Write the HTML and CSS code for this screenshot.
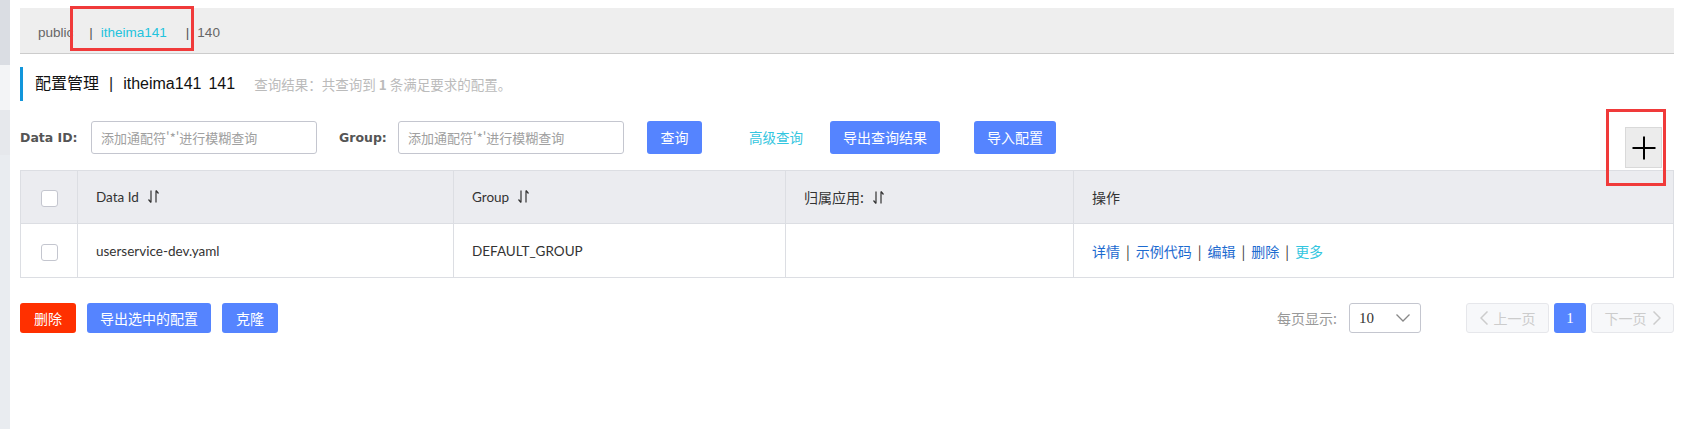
FILE: index.html
```html
<!DOCTYPE html>
<html lang="zh-CN">
<head>
<meta charset="utf-8">
<title>配置管理</title>
<link rel="stylesheet" href="styles.css">
</head>
<body>
<div class="app">
  <aside class="sidebar">
    <div class="sb-a"></div>
    <div class="sb-b"></div>
    <div class="sb-c"></div>
  </aside>
  <main class="main">
    <div class="ns-bar">
      <span class="ns ns-first">public</span>
      <span class="sep">|</span>
      <span class="ns active">itheima141</span>
      <span class="sep">|</span>
      <span class="ns">140</span>
    </div>

    <div class="title">
      <span>配置管理</span>
      <span class="title-bar">|</span>
      <span>itheima141</span>
      <span class="title-id">141</span>
      <span class="result">查询结果：共查询到 <b>1</b> 条满足要求的配置。</span>
    </div>

    <div class="filter">
      <span class="label label-id">Data ID:</span>
      <div class="input">添加通配符'*'进行模糊查询</div>
      <span class="label label-group">Group:</span>
      <div class="input">添加通配符'*'进行模糊查询</div>
      <button class="btn btn-primary btn-query">查询</button>
      <span class="text-btn">高级查询</span>
      <button class="btn btn-primary btn-export">导出查询结果</button>
      <button class="btn btn-primary btn-import">导入配置</button>
      <button class="add-btn" aria-label="新建配置">
        <svg width="24" height="24" viewBox="0 0 24 24"><path d="M12 0.5V23.5M0.5 12H23.5" stroke="#000" stroke-width="2" fill="none"/></svg>
      </button>
    </div>

    <table class="grid">
      <colgroup>
        <col class="c-check"><col class="c-id"><col class="c-group"><col class="c-app"><col class="c-op">
      </colgroup>
      <thead>
        <tr>
          <th class="cell-check"><span class="checkbox"></span></th>
          <th>Data Id<svg class="sort" width="11" height="13" viewBox="0 0 11 13"><path d="M3 0.5V12.5M3 12.5L0.5 9.5M8 12.5V0.5M8 0.5L10.5 3.5" stroke="#333" stroke-width="1.2" fill="none"/></svg></th>
          <th>Group<svg class="sort" width="11" height="13" viewBox="0 0 11 13"><path d="M3 0.5V12.5M3 12.5L0.5 9.5M8 12.5V0.5M8 0.5L10.5 3.5" stroke="#333" stroke-width="1.2" fill="none"/></svg></th>
          <th class="cjk">归属应用:<svg class="sort" width="11" height="13" viewBox="0 0 11 13"><path d="M3 0.5V12.5M3 12.5L0.5 9.5M8 12.5V0.5M8 0.5L10.5 3.5" stroke="#333" stroke-width="1.2" fill="none"/></svg></th>
          <th class="cjk">操作</th>
        </tr>
      </thead>
      <tbody>
        <tr>
          <td class="cell-check"><span class="checkbox"></span></td>
          <td>userservice-dev.yaml</td>
          <td>DEFAULT_GROUP</td>
          <td></td>
          <td class="ops cjk"><a>详情</a><span class="op-sep">|</span><a>示例代码</a><span class="op-sep">|</span><a>编辑</a><span class="op-sep">|</span><a>删除</a><span class="op-sep">|</span><a class="more">更多</a></td>
        </tr>
      </tbody>
    </table>

    <div class="footer">
      <button class="btn btn-danger">删除</button>
      <button class="btn btn-primary btn-gap">导出选中的配置</button>
      <button class="btn btn-primary btn-gap btn-clone">克隆</button>
      <div class="pager">
        <span class="pager-label">每页显示:</span>
        <div class="select">
          <span class="select-value">10</span>
          <svg width="14" height="8" viewBox="0 0 14 8"><path d="M0.5 0.5L7 7L13.5 0.5" stroke="#888" stroke-width="1.3" fill="none"/></svg>
        </div>
        <button class="page-btn page-nav page-prev"><svg width="8" height="14" viewBox="0 0 8 14"><path d="M7.5 0.5L1 7L7.5 13.5" stroke="#ccc" stroke-width="1.5" fill="none"/></svg>上一页</button>
        <button class="page-btn page-current">1</button>
        <button class="page-btn page-nav page-next">下一页<svg width="8" height="14" viewBox="0 0 8 14"><path d="M0.5 0.5L7 7L0.5 13.5" stroke="#ccc" stroke-width="1.5" fill="none"/></svg></button>
      </div>
    </div>
  </main>

  <div class="mark mark-ns"></div>
  <div class="mark mark-add"></div>
</div>
</body>
</html>
```

FILE: styles.css
```css
* { box-sizing: border-box; }

html, body {
  margin: 0;
  padding: 0;
  background: #fff;
}

body {
  font-family: Lato, "Noto Sans CJK SC", sans-serif;
  font-size: 13.5px;
  color: #333;
  width: 1684px;
  height: 429px;
  overflow: hidden;
}

.cjk {
  font-family: "Noto Sans CJK SC", sans-serif;
  font-size: 14px;
}

.app {
  position: relative;
  display: flex;
  height: 429px;
}

/* left sidebar strip */
.sidebar {
  width: 10px;
  flex: none;
  display: flex;
  flex-direction: column;
  background: #e9ecf0;
}
.sb-a { height: 65px; background: #dadde3; }
.sb-b { height: 45px; background: #f3f4f6; }
.sb-c { height: 45px; background: #e6e8ec; }

.main {
  flex: 1;
  min-width: 0;
  padding: 8px 10px 0 10px;
}

/* namespace bar */
.ns-bar {
  height: 46px;
  background: #eeeeee;
  border-bottom: 1px solid #cccccc;
  display: flex;
  align-items: center;
  padding: 4px 0 0 18px;
  font-family: "Liberation Sans", sans-serif;
  font-size: 13.5px;
  line-height: 20px;
  color: #666;
}
.ns-first { margin-right: 16px; }
.sep { color: #555; margin-right: 8px; }
.ns.active { color: #22c3dd; margin-right: 19px; }

/* page title */
.title {
  margin-top: 13px;
  height: 34px;
  border-left: 3px solid #1296db;
  padding-left: 12px;
  display: flex;
  align-items: center;
  font-family: "Liberation Sans", "Noto Sans CJK SC", sans-serif;
  font-size: 16px;
  line-height: 22px;
  color: #111;
}
.title-bar { margin: 0 10px 0 10px; color: #222; }
.title-id { margin-left: 7px; }
.result {
  margin-left: 19px;
  font-family: "Noto Sans CJK SC", sans-serif;
  font-size: 13.5px;
  color: #bbbbbb;
}
.result b { font-weight: bold; }

/* filter row */
.filter {
  margin-top: 20px;
  display: flex;
  align-items: flex-start;
}
.label {
  font-family: "DejaVu Sans", sans-serif;
  font-weight: bold;
  font-size: 12.5px;
  color: #555;
  height: 33px;
  line-height: 33px;
}
.label-id { width: 71px; }
.label-group { width: 59px; margin-left: 22px; }
.input {
  width: 226px;
  height: 33px;
  border: 1px solid #c4c6cf;
  border-radius: 3px;
  padding-left: 9px;
  font-family: "Noto Sans CJK SC", sans-serif;
  font-size: 13px;
  color: #a0a0a0;
  display: flex;
  align-items: center;
  background: #fff;
}

.btn {
  height: 33px;
  padding: 0 13px;
  border: none;
  border-radius: 3px;
  font-family: "Noto Sans CJK SC", sans-serif;
  font-size: 14px;
  color: #fff;
  line-height: 33px;
  cursor: pointer;
}
.btn-primary { background: #5584ff; }
.btn-danger { background: #ff3000; padding: 0 14px; }
.btn-query { margin-left: 23px; width: 55px; }
.text-btn {
  margin-left: 47px;
  height: 33px;
  line-height: 33px;
  font-family: "Noto Sans CJK SC", sans-serif;
  font-size: 13.5px;
  color: #33c6e0;
}
.btn-export { margin-left: 27px; width: 110px; }
.btn-import { margin-left: 34px; width: 82px; }

.add-btn {
  margin-left: auto;
  margin-right: 12px;
  margin-top: 6px;
  width: 37px;
  height: 41px;
  padding: 0;
  background: #ececec;
  border: 1px solid #d9d9d9;
  display: flex;
  align-items: center;
  justify-content: center;
}

/* table */
.grid {
  margin-top: 2px;
  width: 100%;
  border-collapse: collapse;
  table-layout: fixed;
}
.c-check { width: 57px; }
.c-id { width: 376px; }
.c-group { width: 332px; }
.c-app { width: 288px; }
.grid th,
.grid td {
  border: 1px solid #dcdee3;
  padding: 0 18px;
  text-align: left;
  font-weight: normal;
  color: #333;
  line-height: 20px;
}
.grid th {
  height: 53px;
  background: #ebecf0;
}
.grid td {
  height: 54px;
  background: #fff;
}
.grid .cell-check {
  padding: 0;
  text-align: center;
}
.checkbox {
  display: inline-block;
  width: 17px;
  height: 17px;
  border: 1px solid #c4c6cf;
  border-radius: 3px;
  background: #fff;
  vertical-align: middle;
}
.sort {
  margin-left: 9px;
  vertical-align: -1px;
}
.ops a { color: #1d6bd0; }
.ops a.more { color: #33c6e0; }
.op-sep { margin: 0 6px; color: #333; }

/* footer */
.footer {
  margin-top: 25px;
  display: flex;
  align-items: center;
  height: 30px;
}
.footer .btn { height: 30px; line-height: 30px; }
.btn-gap { margin-left: 11px; }
.btn-clone { padding: 0 14px; }
.pager {
  margin-left: auto;
  display: flex;
  align-items: center;
  height: 30px;
}
.pager-label {
  font-family: "Noto Sans CJK SC", sans-serif;
  font-size: 14px;
  color: #999;
  margin-right: 12px;
}
.select {
  width: 72px;
  height: 30px;
  border: 1px solid #c4c6cf;
  border-radius: 3px;
  display: flex;
  align-items: center;
  justify-content: space-between;
  padding: 0 10px 0 9px;
}
.select-value {
  font-family: "Liberation Serif", serif;
  font-size: 15px;
  color: #333;
}
.page-btn {
  height: 30px;
  border-radius: 3px;
  font-family: "Noto Sans CJK SC", sans-serif;
  font-size: 14px;
  display: flex;
  align-items: center;
  justify-content: center;
  padding: 0;
}
.page-nav {
  width: 83px;
  background: #f7f8fa;
  border: 1px solid #e6e7eb;
  color: #cccccc;
  gap: 6px;
}
.page-prev { margin-left: 45px; }
.page-current {
  margin: 0 5px;
  width: 32px;
  background: #5584ff;
  border: none;
  color: #fff;
  font-family: "Liberation Serif", serif;
  font-size: 15px;
}

/* annotation overlays */
.mark {
  position: absolute;
  border: 3px solid #f03a3a;
  pointer-events: none;
}
.mark-ns { left: 70px; top: 6px; width: 124px; height: 45px; }
.mark-add { left: 1606px; top: 109px; width: 60px; height: 77px; }
```
